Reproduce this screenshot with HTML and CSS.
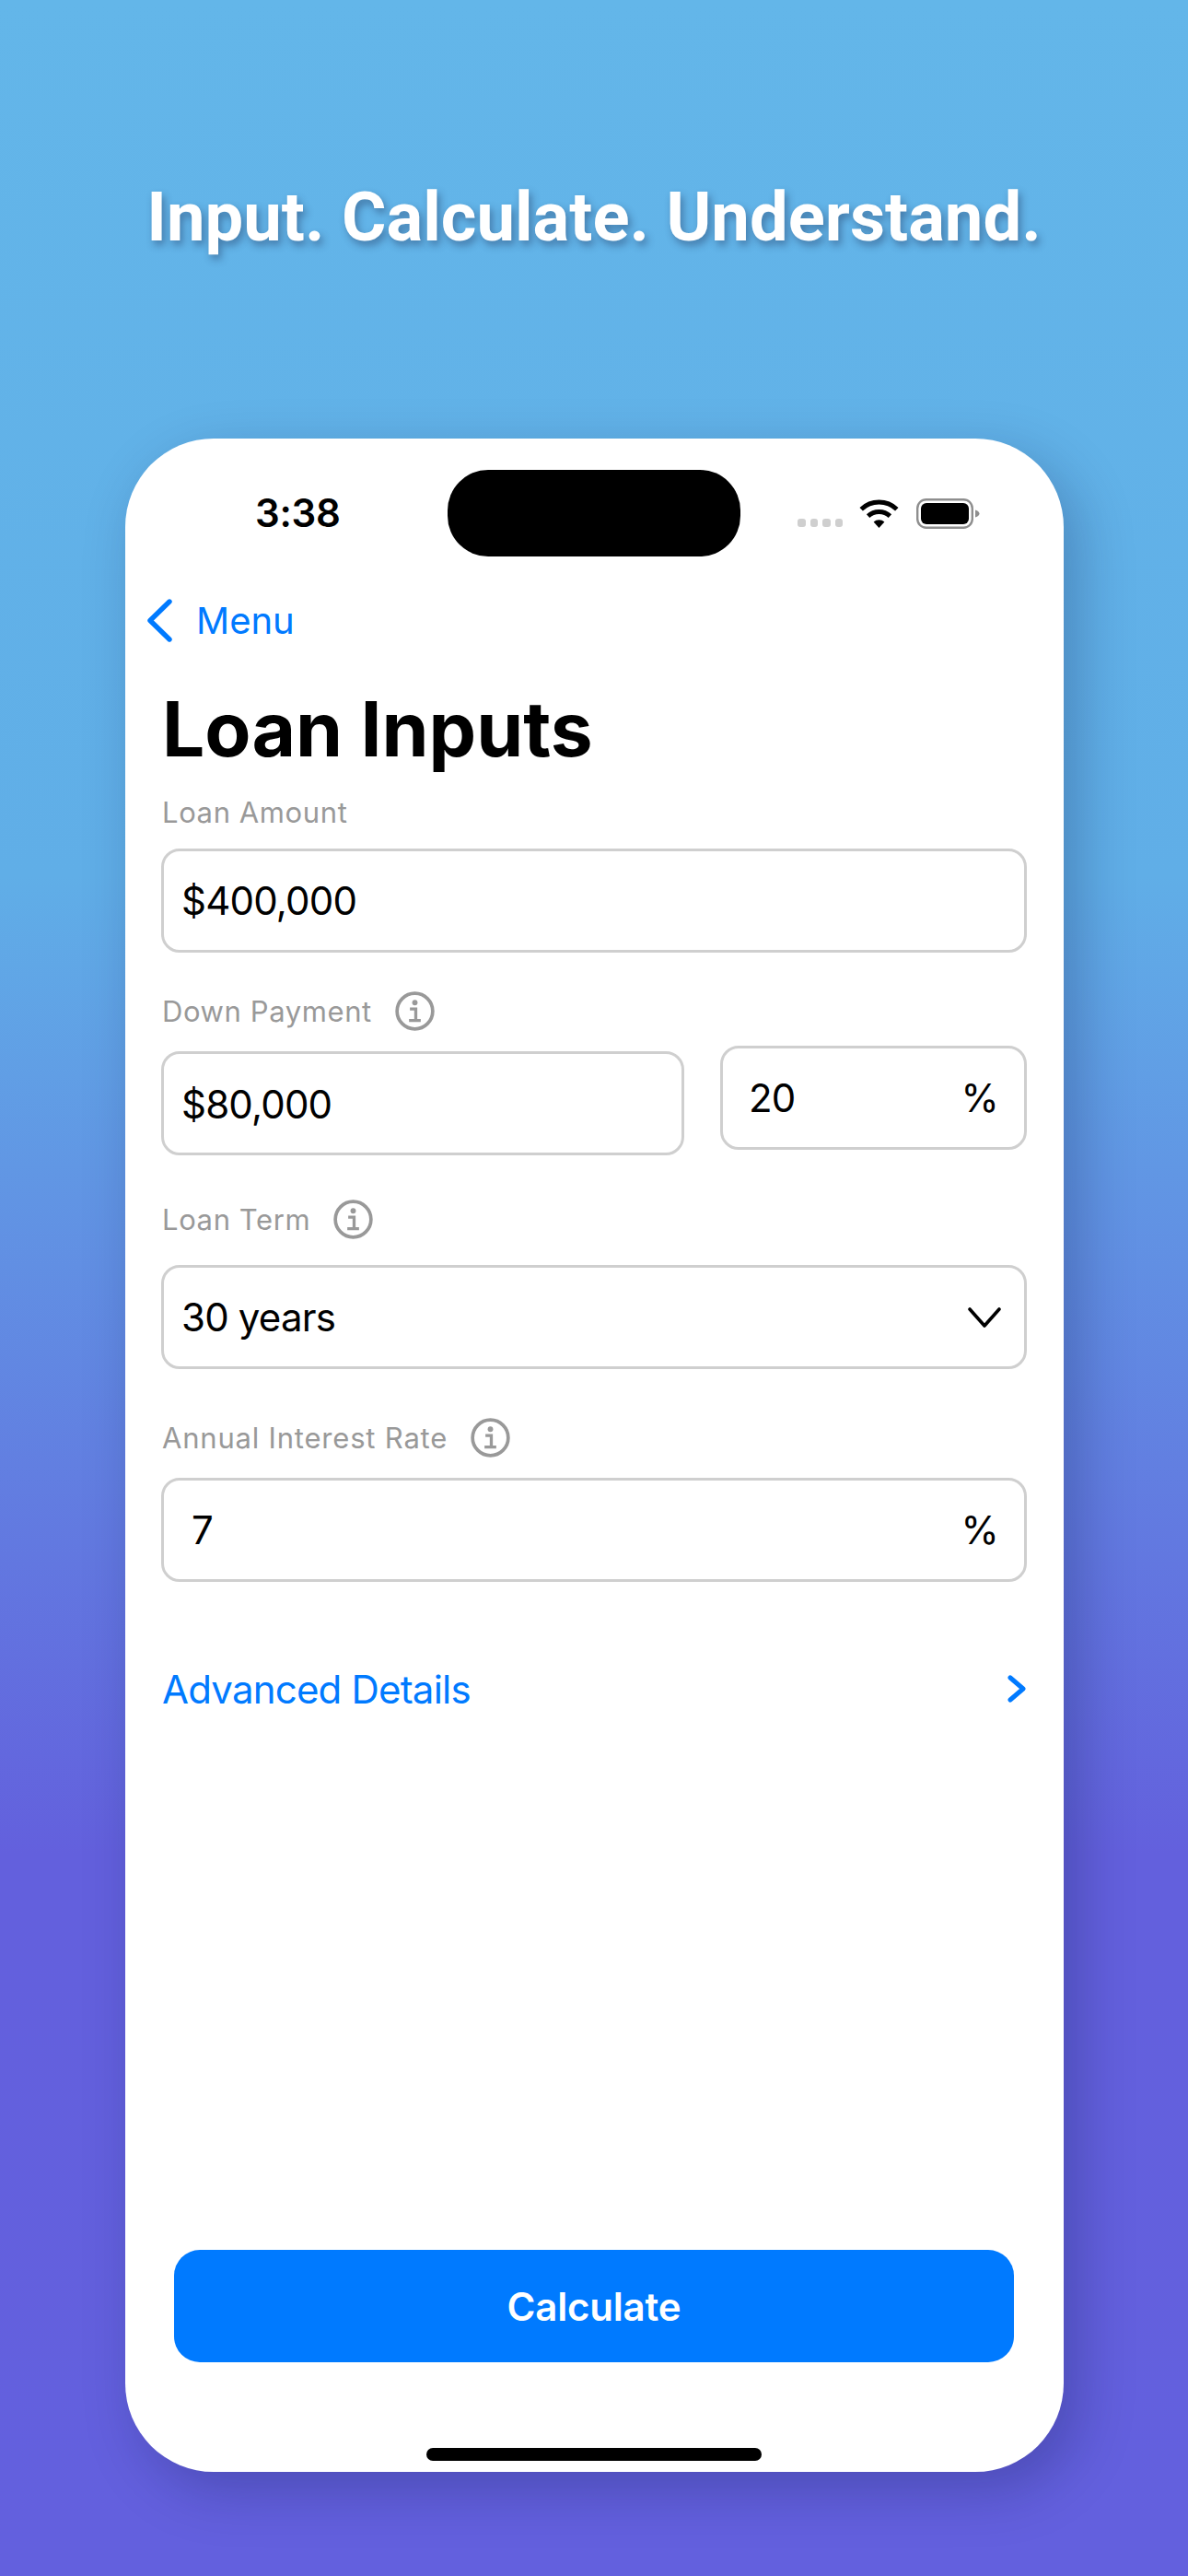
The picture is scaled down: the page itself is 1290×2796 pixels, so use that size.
FILE: index.html
```html
<!DOCTYPE html>
<html lang="en">
<head>
<meta charset="utf-8">
<title>Loan Inputs</title>
<link rel="stylesheet" href="styles.css">
</head>
<body>
<main class="page">
  <h2 class="headline">Input. Calculate. Understand.</h2>
  <section class="phone">
    <div class="status">
      <div class="time-slot"><span class="time">3:38</span></div>
      <div class="island"></div>
      <div class="status-icons">
        <div class="dots"><i></i><i></i><i></i><i></i></div>
        <svg class="wifi" viewBox="0 0 43 31" aria-hidden="true">
          <path d="M2.2 10.8A28 28 0 0 1 40.8 10.8" fill="none" stroke="#000" stroke-width="5"/>
          <path d="M9.6 18.2A17.5 17.5 0 0 1 33.4 18.2" fill="none" stroke="#000" stroke-width="5"/>
          <path d="M15.6 24.4A9 9 0 0 1 27.4 24.4L21.5 31Z" fill="#000"/>
        </svg>
        <svg class="battery" viewBox="0 0 69 33" aria-hidden="true">
          <rect x="1.2" y="1.2" width="59.6" height="30.6" rx="9.5" fill="none" stroke="#8e8e8e" stroke-width="2.4"/>
          <rect x="5" y="5" width="52" height="23" rx="6" fill="#000"/>
          <path d="M64 12.5C67 13.5 68.5 15 68.5 16.5S67 19.5 64 20.5Z" fill="#8e8e8e"/>
        </svg>
      </div>
    </div>
    <nav class="back">
      <svg class="back-chevron" viewBox="0 0 28 47" aria-hidden="true"><path d="M25 3L4 23.5L25 44" fill="none" stroke="#007aff" stroke-width="5.4" stroke-linecap="round" stroke-linejoin="round"/></svg>
      <span>Menu</span>
    </nav>
    <div class="content">
      <h1 class="title">Loan Inputs</h1>

      <div class="label-row label-amount"><span>Loan Amount</span></div>
      <div class="field field-amount"><span>$400,000</span></div>

      <div class="label-row label-down"><span>Down Payment</span>
        <svg class="info" viewBox="0 0 44 44" aria-hidden="true"><circle cx="22" cy="22" r="19.8" fill="none" stroke="#999" stroke-width="3.8"/><circle cx="22" cy="12.5" r="3" fill="#999"/><path d="M16.5 19.6H23V32M15.5 32.4H28.5" fill="none" stroke="#999" stroke-width="3.4"/></svg>
      </div>
      <div class="split">
        <div class="field field-down"><span>$80,000</span></div>
        <div class="field field-pct"><span>20</span><span>%</span></div>
      </div>

      <div class="label-row label-term"><span>Loan Term</span>
        <svg class="info" viewBox="0 0 44 44" aria-hidden="true"><circle cx="22" cy="22" r="19.8" fill="none" stroke="#999" stroke-width="3.8"/><circle cx="22" cy="12.5" r="3" fill="#999"/><path d="M16.5 19.6H23V32M15.5 32.4H28.5" fill="none" stroke="#999" stroke-width="3.4"/></svg>
      </div>
      <div class="field field-term"><span>30 years</span>
        <svg class="select-chevron" viewBox="0 0 36 22" aria-hidden="true"><path d="M2 2L18 20L34 2" fill="none" stroke="#000" stroke-width="3.6" stroke-linecap="round" stroke-linejoin="round"/></svg>
      </div>

      <div class="label-row label-rate"><span>Annual Interest Rate</span>
        <svg class="info" viewBox="0 0 44 44" aria-hidden="true"><circle cx="22" cy="22" r="19.8" fill="none" stroke="#999" stroke-width="3.8"/><circle cx="22" cy="12.5" r="3" fill="#999"/><path d="M16.5 19.6H23V32M15.5 32.4H28.5" fill="none" stroke="#999" stroke-width="3.4"/></svg>
      </div>
      <div class="field field-rate"><span>7</span><span>%</span></div>

      <div class="advanced"><span>Advanced Details</span>
        <svg class="advanced-chevron" viewBox="0 0 20 30" aria-hidden="true"><path d="M3 3L17 15L3 27" fill="none" stroke="#007aff" stroke-width="5" stroke-linecap="round" stroke-linejoin="round"/></svg>
      </div>
    </div>
    <button class="calculate" type="button">Calculate</button>
    <div class="home-bar"></div>
  </section>
</main>
</body>
</html>
```

FILE: styles.css
```css
* { box-sizing: border-box; }

html, body { margin: 0; padding: 0; }

body {
  width: 1290px;
  height: 2796px;
  overflow: hidden;
  font-family: "Inter", "Liberation Sans", sans-serif;
  background: linear-gradient(180deg, #63b6e9 0%, #60aee7 34%, #6360dd 72%, #6360de 100%);
}

.page {
  display: flex;
  flex-direction: column;
  padding-top: 191px;
}

.headline {
  margin: 0;
  height: 90px;
  font-family: "Roboto", sans-serif;
  font-weight: 700;
  font-size: 74.2px;
  line-height: 90px;
  text-align: center;
  color: #fff;
  white-space: nowrap;
  text-shadow: 3px 5px 8px rgba(30, 50, 90, 0.45);
}

.phone {
  display: flex;
  flex-direction: column;
  width: 1019px;
  height: 2207px;
  margin: 195px 0 0 136px;
  padding-top: 34px;
  border-radius: 96px;
  background: #fff;
  box-shadow: 16px 20px 60px rgba(10, 20, 70, 0.26);
}

.status {
  display: flex;
  align-items: center;
  height: 94px;
}

.time-slot {
  width: 350px;
  padding-left: 141px;
}

.time {
  font-weight: 600;
  font-size: 42px;
  line-height: 50px;
  letter-spacing: -0.3px;
  color: #000;
}

.island {
  width: 318px;
  height: 94px;
  border-radius: 44px;
  background: #000;
}

.status-icons {
  display: flex;
  align-items: center;
  padding-left: 62px;
}

.dots {
  display: flex;
  gap: 5px;
  margin-top: 21px;
}

.dots i {
  width: 8.5px;
  height: 8.5px;
  border-radius: 3px;
  background: #cfcfcf;
}

.wifi {
  width: 43px;
  height: 31px;
  margin-left: 18px;
}

.battery {
  width: 69px;
  height: 33px;
  margin-left: 19px;
}

.back {
  display: flex;
  align-items: center;
  gap: 26px;
  height: 47px;
  margin: 46px 0 0 23px;
  font-size: 40px;
  color: #007aff;
}

.back-chevron {
  width: 28px;
  height: 47px;
}

.content {
  padding: 0 40px 0 39px;
}

.title {
  margin: 45px 0 0;
  padding-left: 1px;
  font-weight: 700;
  font-size: 82px;
  line-height: 100px;
  color: #000;
}

.label-row {
  display: flex;
  align-items: center;
  gap: 25px;
  height: 42px;
  padding-left: 1px;
  font-size: 31px;
  letter-spacing: 0.6px;
  color: #999;
}

.label-amount { margin-top: 18px; }
.label-down { margin-top: 42px; }
.label-term { margin-top: 48px; }
.label-rate { margin-top: 53px; letter-spacing: 0.8px; }

.info {
  width: 43px;
  height: 43px;
}

.field {
  display: flex;
  align-items: center;
  justify-content: space-between;
  height: 113px;
  padding: 0 28px 0 19px;
  border: 3px solid #cfcfcf;
  border-radius: 20px;
  font-size: 42px;
  letter-spacing: -0.8px;
  color: #000;
}

.field-amount { margin-top: 19px; }

.split {
  display: flex;
  align-items: flex-start;
  gap: 39px;
  margin-top: 17px;
}

.field-down {
  flex: none;
  width: 568px;
  margin-top: 6px;
  padding-top: 2px;
}

.field-pct {
  flex: 1;
  height: 113px;
  padding-left: 28px;
}

.field-term {
  margin-top: 29px;
  padding-right: 25px;
}

.field-rate {
  margin-top: 23px;
  padding-left: 30px;
}

.select-chevron {
  width: 36px;
  height: 22px;
}

.advanced {
  display: flex;
  align-items: center;
  justify-content: space-between;
  height: 50px;
  margin-top: 91px;
  padding: 0 1px;
  font-size: 42px;
  letter-spacing: -0.8px;
  color: #007aff;
}

.advanced-chevron {
  width: 20px;
  height: 30px;
}

.calculate {
  display: block;
  width: 912px;
  height: 122px;
  margin: auto 0 0 53px;
  padding: 0;
  border: 0;
  border-radius: 28px;
  background: #007aff;
  font-family: inherit;
  font-weight: 600;
  font-size: 42px;
  letter-spacing: -0.2px;
  color: #fff;
}

.home-bar {
  width: 364px;
  height: 14px;
  margin: 93px 0 12px 327px;
  border-radius: 7px;
  background: #000;
}
```
